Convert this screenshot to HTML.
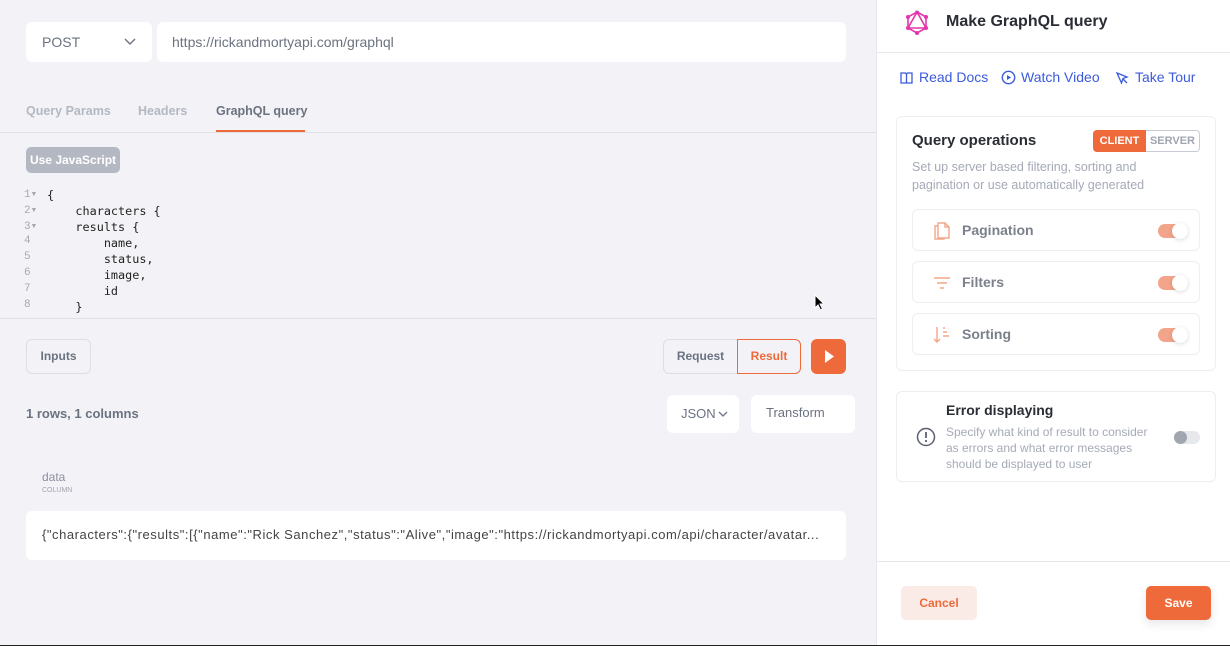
<!DOCTYPE html>
<html><head><meta charset="utf-8"><style>
*{box-sizing:border-box;margin:0;padding:0}
body{width:1230px;height:646px;overflow:hidden;background:#f3f3f7;font-family:"Liberation Sans",sans-serif;position:relative;color:#6b7280}
.a{position:absolute}
.box{position:absolute;background:#fff;border-radius:6px}
.mono{font-family:"DejaVu Sans Mono","Liberation Mono",monospace;font-size:11.8px;color:#222}
.ln{position:absolute;left:24px;width:32px;font-family:"Liberation Mono",monospace;font-size:11px;color:#aaa}
.tog{position:absolute;width:30px;height:14px;border-radius:7px;background:#f2a58a}
.tog::after{content:"";position:absolute;right:0;top:-1px;width:16px;height:16px;border-radius:50%;background:#fff;box-shadow:0 1px 4px rgba(0,0,0,.15)}
.row{position:absolute;left:912px;width:288px;height:42px;border:1px solid #eceef2;border-radius:6px;background:#fff}
.row span{position:absolute;left:49px;top:12px;font-size:14px;font-weight:bold;color:#7b808a}
.lnk{position:absolute;top:69px;font-size:14px;color:#3b5bdb}
</style></head><body>
<div class="box" style="left:26px;top:22px;width:126px;height:40px;"><span class="a" style="left:16px;top:12px;font-size:14px;color:#6b7280">POST</span><svg class="a" style="left:98px;top:16px" width="12" height="8"><path d="M1 1l5 5 5-5" stroke="#6b7280" fill="none" stroke-width="1.4"/></svg></div>
<div class="box" style="left:157px;top:22px;width:689px;height:40px;"><span class="a" style="left:15px;top:12px;font-size:14px;color:#6b7280">https://rickandmortyapi.com/graphql</span></div>
<span class="a" style="left:26px;top:104px;font-size:12.5px;color:#b3b8c2;font-weight:bold">Query Params</span>
<span class="a" style="left:138px;top:104px;font-size:12.5px;color:#b3b8c2;font-weight:bold">Headers</span>
<span class="a" style="left:216px;top:104px;font-size:12.5px;color:#6b7280;font-weight:bold">GraphQL query</span>
<div class="a" style="left:216px;top:130px;width:89px;height:3px;background:#ee6a3b"></div>
<div class="a" style="left:0;top:132px;width:876px;height:1px;background:#dfe1e6"></div>
<div class="a" style="left:26px;top:147px;width:94px;height:26px;background:#b3b8c2;border-radius:5px;color:#fff;font-size:12px;font-weight:bold;text-align:center;line-height:26px">Use JavaScript</div>
<div class="a" style="left:0;top:187px;width:400px;height:130px;overflow:hidden">
<div class="ln" style="top:0">1▾</div><div class="ln" style="top:16px">2▾</div><div class="ln" style="top:32px">3▾</div><div class="ln" style="top:48px">4</div><div class="ln" style="top:64px">5</div><div class="ln" style="top:80px">6</div><div class="ln" style="top:96px">7</div><div class="ln" style="top:112px">8</div>
<pre class="mono a" style="left:47px;top:0;line-height:16px">{
    characters {
    results {
        name,
        status,
        image,
        id
    }
}</pre></div>
<div class="a" style="left:0;top:318px;width:876px;height:1px;background:#dfe1e6"></div>
<div class="a" style="left:26px;top:339px;width:65px;height:35px;border:1px solid #dcdfe5;border-radius:6px;font-size:12px;font-weight:bold;color:#6b7280;text-align:center;line-height:33px">Inputs</div>
<div class="a" style="left:663px;top:339px;width:74px;height:35px;border:1px solid #dcdfe5;border-right:none;border-radius:6px 0 0 6px;font-size:12px;font-weight:bold;color:#6b7280;text-align:center;line-height:33px">Request</div>
<div class="a" style="left:737px;top:339px;width:64px;height:35px;border:1px solid #ee6a3b;border-radius:0 6px 6px 0;font-size:12px;font-weight:bold;color:#ee6a3b;text-align:center;line-height:33px">Result</div>
<div class="a" style="left:811px;top:339px;width:35px;height:35px;background:#ee6a3b;border-radius:6px"><svg width="35" height="35"><path d="M14 11l9 6.5-9 6.5z" fill="#fff"/></svg></div>
<span class="a" style="left:26px;top:406px;font-size:13px;font-weight:bold;color:#6b7280">1 rows, 1 columns</span>
<div class="box" style="left:667px;top:395px;width:72px;height:38px"><span class="a" style="left:14px;top:11px;font-size:13px">JSON</span><svg class="a" style="left:51px;top:16px" width="10" height="7"><path d="M1 1l4 4 4-4" stroke="#6b7280" fill="none" stroke-width="1.3"/></svg></div>
<div class="box" style="left:751px;top:395px;width:104px;height:38px"><span class="a" style="left:15px;top:10px;font-size:13px">Transform</span></div>
<span class="a" style="left:42px;top:470px;font-size:12px;color:#8a90a0">data</span>
<span class="a" style="left:42px;top:487px;font-size:7px;color:#a0a5b0">COLUMN</span>
<div class="box" style="left:26px;top:511px;width:820px;height:49px"><span class="a" style="left:16px;top:16px;font-size:13px;color:#444;letter-spacing:0.55px;white-space:nowrap">{"characters":{"results":[{"name":"Rick Sanchez","status":"Alive","image":"https://rickandmortyapi.com/api/character/avatar...</span></div>
<svg class="a" style="left:814px;top:294px" width="12" height="18"><path d="M1 1v13l3-3 2.5 5 2-1-2.5-5h4z" fill="#000" stroke="#fff" stroke-width="1"/></svg>

<div class="a" style="left:876px;top:0;width:354px;height:646px;background:#fff;border-left:1px solid #e6e8ec"></div>
<svg class="a" style="left:905px;top:10px" width="24" height="26"><g stroke="#e535ab" stroke-width="1.6" fill="none"><polygon points="12,2 21,7 21,18 12,23 3,18 3,7"/><polygon points="12,2 21,18 3,18"/></g><g fill="#e535ab"><circle cx="12" cy="2.5" r="2"/><circle cx="21" cy="7" r="2"/><circle cx="21" cy="18" r="2"/><circle cx="12" cy="23" r="2"/><circle cx="3" cy="18" r="2"/><circle cx="3" cy="7" r="2"/></g></svg>
<span class="a" style="left:946px;top:13px;font-size:16px;font-weight:bold;color:#2a2d34">Make GraphQL query</span>
<div class="a" style="left:876px;top:52px;width:354px;height:1px;background:#e6e8ec"></div>
<svg class="a" style="left:900px;top:72px" width="13" height="12"><path d="M1 1h4.5l1 1 1-1H12v10H7.5l-1 0-1 0H1z M6.5 2v9" stroke="#3b5bdb" fill="none" stroke-width="1.3"/></svg>
<span class="lnk" style="left:919px">Read Docs</span>
<svg class="a" style="left:1001px;top:70px" width="15" height="15"><circle cx="7.5" cy="7.5" r="6.2" stroke="#3b5bdb" fill="none" stroke-width="1.4"/><path d="M6 5v5l4-2.5z" fill="#3b5bdb"/></svg>
<span class="lnk" style="left:1021px">Watch Video</span>
<svg class="a" style="left:1116px;top:72px" width="13" height="13"><path d="M1 1l10 4-4 1.5L5.5 11z M7 7l4 4" stroke="#3b5bdb" fill="none" stroke-width="1.3"/></svg>
<span class="lnk" style="left:1135px">Take Tour</span>
<div class="a" style="left:896px;top:116px;width:320px;height:255px;border:1px solid #eceef2;border-radius:6px"></div>
<span class="a" style="left:912px;top:132px;font-size:15px;font-weight:bold;color:#2a2d34">Query operations</span>
<div class="a" style="left:1093px;top:130px;width:53px;height:22px;background:#ee6a3b;border-radius:4px 0 0 4px;color:#fff;font-size:11px;font-weight:bold;text-align:center;line-height:22px">CLIENT</div>
<div class="a" style="left:1146px;top:130px;width:54px;height:22px;border:1px solid #c8ccd4;border-left:none;border-radius:0 4px 4px 0;color:#a0a5b0;font-size:11px;font-weight:bold;text-align:center;line-height:20px">SERVER</div>
<div class="a" style="left:912px;top:158px;width:270px;font-size:12.5px;line-height:18px;color:#a5aab6">Set up server based filtering, sorting and pagination or use automatically generated</div>
<div class="row" style="top:209px"><svg class="a" style="left:20px;top:11px" width="18" height="20"><path d="M5 4V2h7l4 4v11H5zM12 2v4h4M5 5H2v13h9v-1" stroke="#f2a58a" fill="none" stroke-width="1.4"/></svg><span>Pagination</span><div class="tog" style="left:245px;top:14px"></div></div>
<div class="row" style="top:261px"><svg class="a" style="left:20px;top:14px" width="18" height="14"><path d="M1 2h16M4 7h10M7 12h4" stroke="#f2a58a" stroke-width="1.5"/></svg><span>Filters</span><div class="tog" style="left:245px;top:14px"></div></div>
<div class="row" style="top:313px"><svg class="a" style="left:20px;top:11px" width="18" height="20"><path d="M4 2v15M1 14l3 3 3-3M10 3h2M10 7h4M10 11h6" stroke="#f2a58a" stroke-width="1.4" fill="none"/></svg><span>Sorting</span><div class="tog" style="left:245px;top:14px"></div></div>
<div class="a" style="left:896px;top:391px;width:320px;height:91px;border:1px solid #eceef2;border-radius:6px"></div>
<svg class="a" style="left:916px;top:427px" width="20" height="20"><circle cx="10" cy="10" r="8.5" stroke="#5a6070" fill="none" stroke-width="1.5"/><path d="M10 5v6" stroke="#5a6070" stroke-width="1.8"/><circle cx="10" cy="14" r="1.1" fill="#5a6070"/></svg>
<span class="a" style="left:946px;top:402px;font-size:14px;font-weight:bold;color:#2a2d34">Error displaying</span>
<div class="a" style="left:946px;top:424px;width:212px;font-size:12px;line-height:16px;color:#a5aab6">Specify what kind of result to consider as errors and what error messages should be displayed to user</div>
<div class="a" style="left:1174px;top:431px;width:26px;height:13px;border-radius:7px;background:#e6e8ec"><div class="a" style="left:0;top:0;width:13px;height:13px;border-radius:50%;background:#a0a5b0"></div></div>
<div class="a" style="left:876px;top:561px;width:354px;height:1px;background:#e6e8ec"></div>
<div class="a" style="left:901px;top:586px;width:76px;height:34px;background:#fbebe6;border-radius:5px;color:#ee6a3b;font-size:12px;font-weight:bold;text-align:center;line-height:34px">Cancel</div>
<div class="a" style="left:1146px;top:586px;width:65px;height:34px;background:#ee6a3b;border-radius:5px;color:#fff;font-size:12px;font-weight:bold;text-align:center;line-height:34px;box-shadow:0 4px 10px rgba(0,0,0,.1)">Save</div>
<div class="a" style="left:0;top:645px;width:1230px;height:1px;background:#222"></div>
</body></html>
